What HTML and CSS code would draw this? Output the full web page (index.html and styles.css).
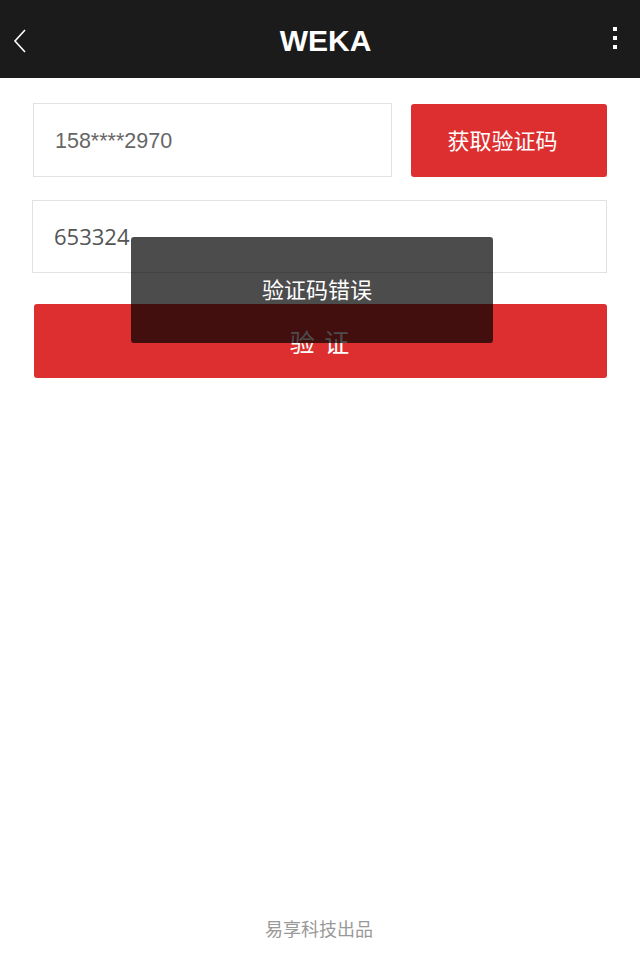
FILE: index.html
```html
<!DOCTYPE html>
<html lang="zh-CN">
<head>
<meta charset="utf-8">
<title>WEKA</title>
<link rel="stylesheet" href="styles.css">
</head>
<body>
<div class="page">
  <header class="topbar">
    <span class="back">
      <svg width="14" height="24" viewBox="0 0 14 24"><path d="M12 1 L2 12 L12 23" fill="none" stroke="#fff" stroke-width="1.6"/></svg>
    </span>
    <h1 class="title">WEKA</h1>
    <span class="more">
      <svg width="6" height="24" viewBox="0 0 6 24"><rect x="1" y="1" width="4" height="4" fill="#fff"/><rect x="1" y="10" width="4" height="4" fill="#fff"/><rect x="1" y="19" width="4" height="4" fill="#fff"/></svg>
    </span>
  </header>
  <main class="form">
    <div class="row">
      <div class="field phone">158****2970</div>
      <button class="btn getcode">获取验证码</button>
    </div>
    <div class="field code">653324</div>
    <button class="btn verify">验 证</button>
  </main>
  <footer class="footer">易享科技出品</footer>
  <div class="toast">验证码错误</div>
</div>
</body>
</html>
```
FILE: styles.css
```css
* { box-sizing: border-box; }
html, body { margin: 0; padding: 0; background: #fff; }
body { font-family: "Noto Sans CJK SC", "Liberation Sans", sans-serif; }
.page {
  position: relative;
  width: 640px;
  height: 960px;
  display: flex;
  flex-direction: column;
}
.topbar {
  height: 78px;
  background: #1b1b1b;
  display: flex;
  align-items: center;
  justify-content: space-between;
  padding: 0 22px 0 13px;
}
.back { display: flex; width: 14px; margin-top: 4px; }
.more { display: flex; margin-top: -2px; }
.title {
  margin: 4px 0 0 12px;
  font-family: "Liberation Sans", Arial, sans-serif;
  font-weight: bold;
  font-size: 30px;
  color: #fff;
}
.form {
  padding: 25px 33px 0 33px;
  display: flex;
  flex-direction: column;
}
.row {
  display: flex;
  gap: 19px;
  margin-bottom: 23px;
}
.field {
  border: 1px solid #e2e2e2;
  height: 74px;
  display: flex;
  align-items: center;
  padding-left: 21px;
  color: #666;
}
.phone {
  width: 359px;
  font-family: "Liberation Sans", Arial, sans-serif;
  font-size: 21.5px;
  padding-top: 2px;
}
.code {
  margin-left: -1px;
  height: 73px;
  font-family: "Open Sans", "Liberation Sans", sans-serif;
  font-size: 22px;
  color: #555;
  padding-bottom: 2px;
}
.btn {
  border: none;
  background: #dd2f2f;
  color: #fff;
  border-radius: 3px;
  font-family: "Noto Sans CJK SC", sans-serif;
  cursor: pointer;
}
.getcode {
  flex: 1;
  height: 73px;
  margin-top: 1px;
  font-size: 22px;
  padding: 0 13px 3px 0;
}
.verify {
  margin-top: 31px;
  margin-left: 1px;
  height: 74px;
  font-size: 25px;
  letter-spacing: 2px;
  padding-top: 1px;
}
.footer {
  margin-top: auto;
  text-align: center;
  color: #999;
  font-size: 18px;
  padding-bottom: 19px;
  margin-right: 2px;
}
.toast {
  position: absolute;
  left: 131px;
  top: 237px;
  width: 362px;
  height: 106px;
  background: rgba(0, 0, 0, 0.7);
  border-radius: 3px;
  color: #fff;
  font-size: 22px;
  display: flex;
  align-items: center;
  justify-content: center;
  padding: 0 0 5px 10px;
}
```
